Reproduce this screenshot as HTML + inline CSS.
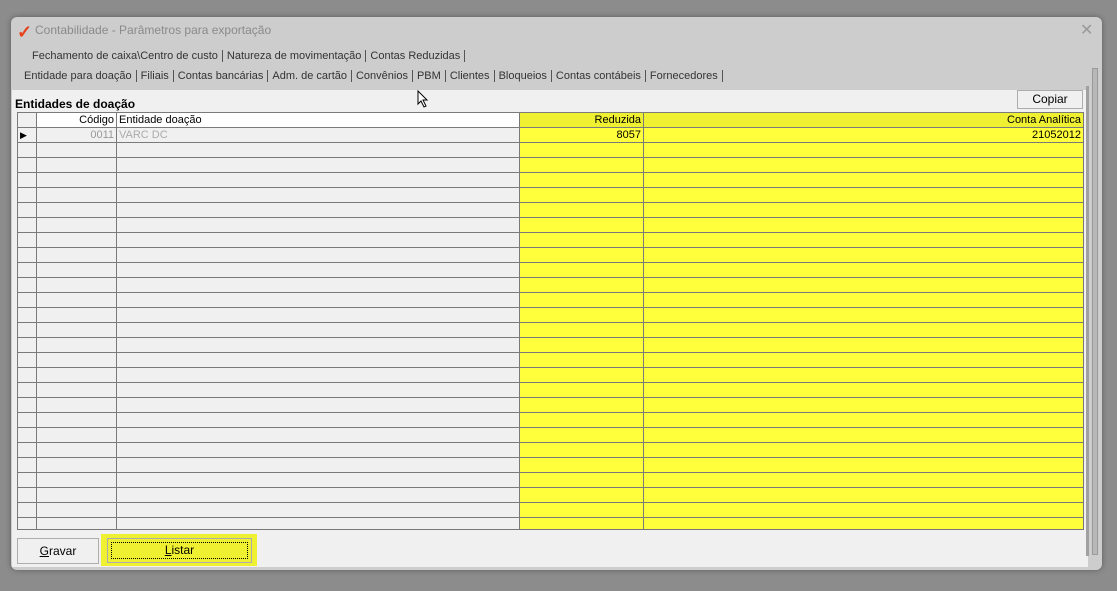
<!DOCTYPE html>
<html><head><meta charset="utf-8"><style>
body{margin:0;width:1117px;height:591px;background:#8c8c8c;position:relative;overflow:hidden;font-family:"Liberation Sans",sans-serif;font-size:11px;color:#000}
.a{position:absolute}
.win{left:11px;top:17px;width:1091px;height:553px;background:#cdcdcd;border-radius:6px;box-shadow:0 0 6px rgba(0,0,0,.35)}
.tabs{color:#333;font-size:11px;white-space:nowrap}
.tabs span{border-right:1px solid #555;padding:0 4px}
table{border-collapse:collapse;table-layout:fixed}
td{border:1px solid #7a7a7a;height:14px;padding:0 2px;font-size:11px;line-height:14px;overflow:hidden;white-space:nowrap}
.y{background:#ffff3c}
.yh{background:#f0f032}
.ind{background:#f0f0f0}
.btn{background:#f0f0f0;border:1px solid #adadad;text-align:center;font-size:11px}
</style></head><body>
<div class="a win"></div>
<div class="a" style="left:17px;top:22px;color:#e8401c;font-size:18px;font-weight:bold">✓</div>
<div class="a" style="left:35px;top:23px;color:#8a8a8a;font-size:12px">Contabilidade - Parâmetros para exportação</div>
<div class="a" style="left:1080px;top:20px;color:#999;font-size:16px">✕</div>
<div class="a tabs" style="left:28px;top:50px"><span>Fechamento de caixa\Centro de custo</span><span>Natureza de movimentação</span><span>Contas Reduzidas</span></div>
<div class="a tabs" style="left:20px;top:70px"><span>Entidade para doação</span><span>Filiais</span><span>Contas bancárias</span><span>Adm. de cartão</span><span>Convênios</span><span>PBM</span><span>Clientes</span><span>Bloqueios</span><span>Contas contábeis</span><span>Fornecedores</span></div>
<div class="a" style="left:12px;top:90px;width:1076px;height:477px;background:#f0f0f0"></div>
<div class="a" style="left:1092px;top:68px;width:4px;height:485px;background:#b8b8b8;border:1px solid #999"></div>
<div class="a" style="left:1086px;top:86px;width:3px;height:470px;background:#a0a0a0"></div>
<div class="a" style="left:15px;top:97px;font-weight:bold;font-size:12px">Entidades de doação</div>
<div class="a btn" style="left:1017px;top:90px;width:64px;height:17px;line-height:17px;font-size:12px">Copiar</div>
<div class="a" style="left:17px;top:112px;width:1066px;height:417px;overflow:hidden;border-bottom:1px solid #777;border-right:1px solid #777">
<table style="width:1066px">
<colgroup><col style="width:19px"><col style="width:80px"><col style="width:403px"><col style="width:124px"><col style="width:440px"></colgroup>
<tr><td class="ind"></td><td style="text-align:right;background:#fff">Código</td><td style="background:#fff">Entidade doação</td><td class="yh" style="text-align:right">Reduzida</td><td class="yh" style="text-align:right">Conta Analítica</td></tr>
<tr><td class="ind" style="font-size:9px">▶</td><td style="text-align:right;color:#999">0011</td><td style="color:#aaa">VARC DC</td><td class="y" style="text-align:right">8057</td><td class="y" style="text-align:right">21052012</td></tr>
<script>for(let i=0;i<27;i++)document.write('<tr><td class="ind"></td><td></td><td></td><td class="y"></td><td class="y"></td></tr>')</script>
</table></div>
<div class="a btn" style="left:17px;top:538px;width:80px;height:24px;line-height:24px;font-size:12px"><u>G</u>ravar</div>
<div class="a" style="left:101px;top:534px;width:156px;height:32px;background:#f0f032"></div>
<div class="a btn" style="left:107px;top:538px;width:143px;height:23px;background:#f0f032;line-height:23px;font-size:12px"><div style="position:absolute;left:3px;top:3px;right:3px;bottom:3px;border:1px dotted #000"></div><u>L</u>istar</div>
<svg class="a" style="left:417px;top:90px" width="12" height="18"><path d="M1 1 L1 14 L4 11 L7 17 L9 16 L6 10 L10 10 Z" fill="#fff" stroke="#000" stroke-width="1"/></svg>
</body></html>
